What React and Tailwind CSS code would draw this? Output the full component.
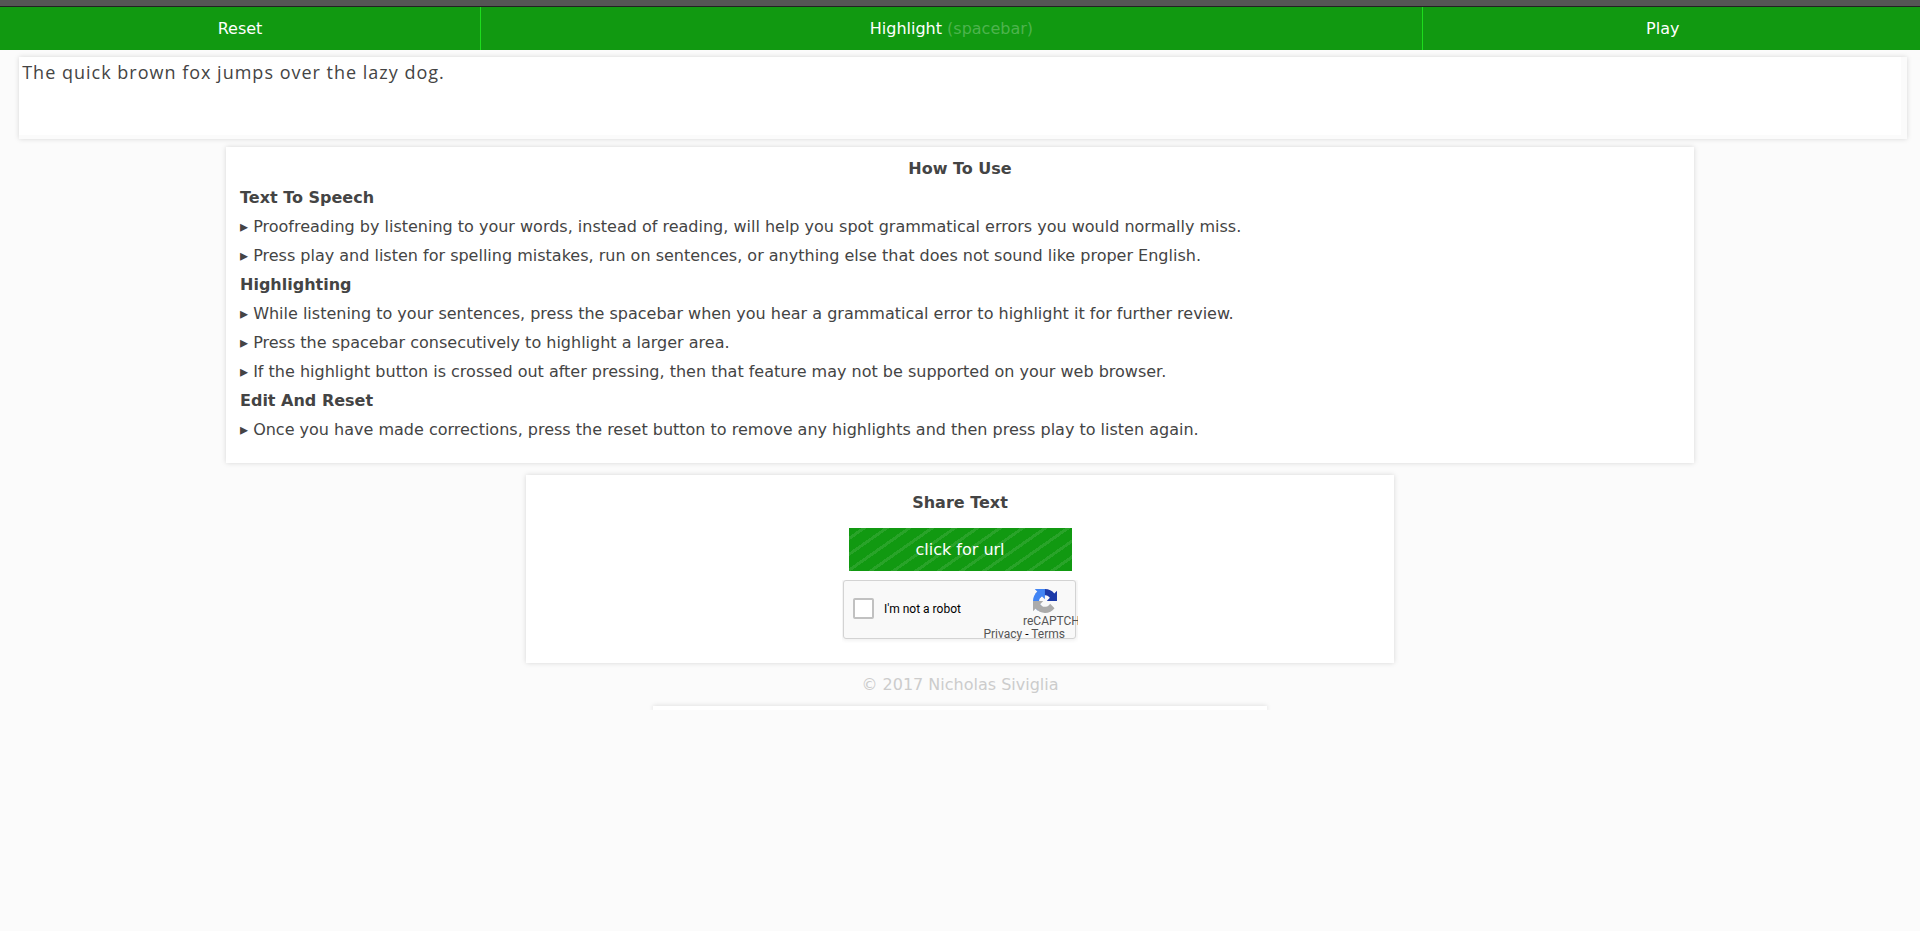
import React, { useState } from "react";

const sections = [
  {
    title: "Text To Speech",
    items: [
      "Proofreading by listening to your words, instead of reading, will help you spot grammatical errors you would normally miss.",
      "Press play and listen for spelling mistakes, run on sentences, or anything else that does not sound like proper English.",
    ],
  },
  {
    title: "Highlighting",
    items: [
      "While listening to your sentences, press the spacebar when you hear a grammatical error to highlight it for further review.",
      "Press the spacebar consecutively to highlight a larger area.",
      "If the highlight button is crossed out after pressing, then that feature may not be supported on your web browser.",
    ],
  },
  {
    title: "Edit And Reset",
    items: [
      "Once you have made corrections, press the reset button to remove any highlights and then press play to listen again.",
    ],
  },
];

function Toolbar() {
  return (
    <header className="border-t-6 border-[#555555]">
      <div className="flex h-11 border-t border-[#222222] bg-[#119911] text-white">
        <button type="button" className="w-1/4 shrink-0">Reset</button>
        <button type="button" className="w-[calc(49%+2px)] shrink-0 border-x border-[#1ddd1d]">
          Highlight <span className="text-[#4db34d]">(spacebar)</span>
        </button>
        <button type="button" className="w-1/4">Play</button>
      </div>
    </header>
  );
}

function RecaptchaLogo() {
  return (
    <svg viewBox="0 0 64 64" className="size-6" aria-hidden="true">
      <path fill="#1c3aa9" d="M64 31.955l-.033-1.37V4.687l-7.16 7.16C50.948 4.674 42.033.093 32.05.093c-10.4 0-19.622 4.96-25.458 12.64l11.736 11.86a15.55 15.55 0 0 1 4.754-5.334c2.05-1.6 4.952-2.906 8.968-2.906.485 0 .86.057 1.135.163 4.976.393 9.288 3.14 11.828 7.124l-8.307 8.307L64 31.953" />
      <path fill="#4285f4" d="M31.862.094l-1.37.033H4.594l7.16 7.16C4.58 13.147 0 22.06 0 32.046c0 10.4 4.96 19.622 12.64 25.458L24.5 45.768a15.55 15.55 0 0 1-5.334-4.754c-1.6-2.05-2.906-4.952-2.906-8.968 0-.485.057-.86.163-1.135.393-4.976 3.14-9.288 7.124-11.828l8.307 8.307L31.86.095" />
      <path fill="#ababab" d="M.001 32.045l.033 1.37v25.898l7.16-7.16c5.86 7.173 14.774 11.754 24.76 11.754 10.4 0 19.622-4.96 25.458-12.64l-11.736-11.86a15.55 15.55 0 0 1-4.754 5.334c-2.05 1.6-4.952 2.906-8.968 2.906-.485 0-.86-.057-1.135-.163-4.976-.393-9.288-3.14-11.828-7.124l8.307-8.307c-10.522.04-22.4.066-27.295-.005" />
    </svg>
  );
}

function Captcha() {
  return (
    <div className="overflow-hidden pr-0.5 pb-1 pl-px font-['Roboto',sans-serif] text-xs">
      <div className="flex h-[59px] w-[233px] rounded-[3px] border border-[#d3d3d3] bg-[#f9f9f9] shadow-[0_0_4px_1px_rgba(0,0,0,0.08)]">
        <label className="flex items-center gap-2.5 pb-0.5 pl-[9px] text-black">
          <input
            type="checkbox"
            className="size-[21px] appearance-none rounded-xs border-2 border-[#c1c1c1] bg-white"
          />
          I'm not a robot
        </label>
        <div className="ml-auto flex flex-col items-end pt-2 leading-[13px] whitespace-nowrap text-[#555555]">
          <div className="w-13">
            <div className="pb-0.5 pl-2.5"><RecaptchaLogo /></div>
            <div>reCAPTCHA</div>
          </div>
          <div className="pr-2.5">
            <a href="#privacy">Privacy</a>
            <span className="text-black"> - </span>
            <a href="#terms">Terms</a>
          </div>
        </div>
      </div>
    </div>
  );
}

export default function App() {
  const [text, setText] = useState("The quick brown fox jumps over the lazy dog.");
  return (
    <div className="min-h-screen bg-[#fbfbfb] font-['DejaVu_Sans',sans-serif] text-base text-[#444444]">
      <Toolbar />
      <main>
        <textarea
          aria-label="Text to proofread"
          value={text}
          onChange={(e) => setText(e.target.value)}
          className="mt-[7px] ml-[1%] block h-[82px] w-[calc(98%+6px)] resize-none border-r-6 border-b-4 border-[#fbfbfb] bg-white px-[3px] py-[3px] font-['Open_Sans',sans-serif] text-lg leading-6 tracking-[1px] shadow-[0_0_5px_rgba(0,0,0,0.15)] outline-none"
        />

        <section className="mx-auto mt-2 w-[calc(75%+28px)] bg-white px-3.5 pt-[7px] pb-[19px] leading-[29px] shadow-[0_0_5px_rgba(0,0,0,0.15)]">
          <h2 className="text-center font-bold">How To Use</h2>
          {sections.map((section) => (
            <div key={section.title}>
              <h3 className="font-bold">{section.title}</h3>
              <ul>
                {section.items.map((item) => (
                  <li key={item}>▸ {item}</li>
                ))}
              </ul>
            </div>
          ))}
        </section>

        <section className="mx-auto mt-3 flex w-[calc(45%+4px)] flex-col items-center bg-white pt-[13px] pb-5 shadow-[0_0_5px_rgba(0,0,0,0.15)]">
          <h2 className="leading-[29px] font-bold">Share Text</h2>
          <button
            type="button"
            className="mt-[11px] mb-[9px] h-[43px] w-[223px] bg-[#119911] bg-[repeating-linear-gradient(-35deg,transparent,transparent_10px,rgba(255,255,255,0.1)_10px,rgba(255,255,255,0.1)_13px)] text-white"
          >
            click for url
          </button>
          <Captcha />
        </section>
      </main>
      <footer className="overflow-hidden">
        <p className="py-[7px] text-center leading-[29px] text-[#cccccc]">© 2017 Nicholas Siviglia</p>
        <div className="mx-auto h-1 w-[32%] bg-white shadow-[0_0_5px_rgba(0,0,0,0.15)]" />
      </footer>
    </div>
  );
}
